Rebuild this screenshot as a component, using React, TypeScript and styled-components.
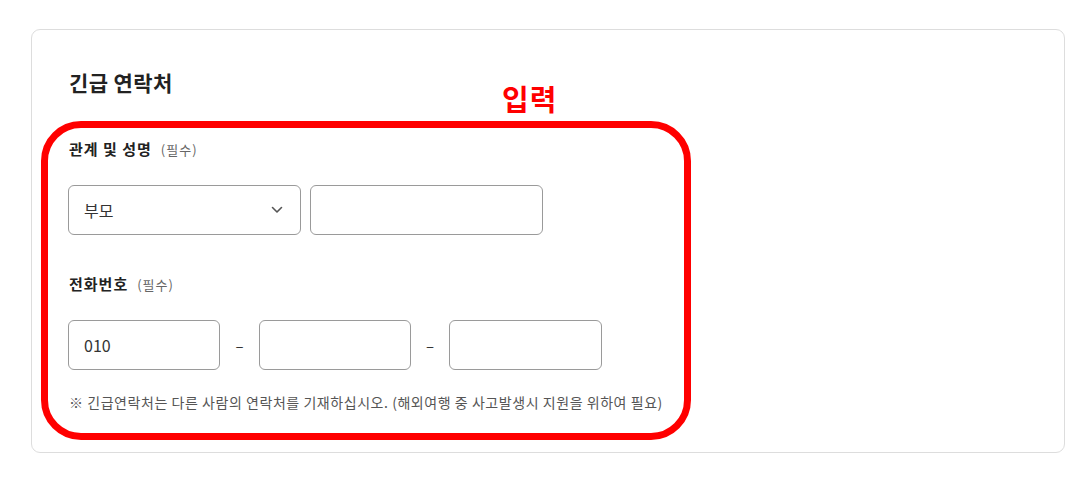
import React from 'react';
import styled, { createGlobalStyle } from 'styled-components';

const GlobalStyle = createGlobalStyle`
  body {
    margin: 0;
    background: #ffffff;
    font-family: "Noto Sans CJK KR", "Noto Sans", sans-serif;
    color: #222;
  }
`;

const Page = styled.div`
  padding: 29px 22px 30px 31px;
`;

const Card = styled.section`
  position: relative;
  box-sizing: border-box;
  width: 1034px;
  border: 1px solid #dddddd;
  border-radius: 9px;
  padding: 38px 36px 40px;
`;

const Title = styled.h2`
  margin: 0 0 0 1px;
  font-size: 21px;
  line-height: 28px;
  font-weight: 700;
  letter-spacing: 0.4px;
  color: #222;
`;

const Field = styled.div<{ $top: number }>`
  display: flex;
  flex-direction: column;
  gap: 25px;
  margin-top: ${(p) => p.$top}px;
`;

const Label = styled.div`
  display: flex;
  align-items: baseline;
  gap: 9px;
  margin-left: 1px;
  font-size: 15px;
  line-height: 20px;
  font-weight: 700;
  letter-spacing: 1px;
  color: #222;
`;

const Required = styled.span`
  font-size: 13px;
  font-weight: 400;
  letter-spacing: 1px;
  color: #666;
`;

const Row = styled.div`
  display: flex;
  align-items: center;
`;

const Box = styled.div<{ $width: number }>`
  box-sizing: border-box;
  display: flex;
  align-items: center;
  justify-content: space-between;
  width: ${(p) => p.$width}px;
  height: 50px;
  padding: 0 17px 0 15px;
  border: 1px solid #9a9a9a;
  border-radius: 6px;
  font-size: 16px;
  color: #333;
  background: #fff;
`;

const Gap = styled.div`
  width: 9px;
`;

const Dash = styled.span<{ $width: number }>`
  width: ${(p) => p.$width}px;
  text-align: center;
  font-size: 15px;
  color: #333;
`;

const Note = styled.p`
  margin: 22px 0 0 1px;
  font-size: 14px;
  line-height: 20px;
  letter-spacing: 0.55px;
  color: #555;
`;

const Highlight = styled.div`
  position: absolute;
  left: 9px;
  top: 91px;
  width: 650px;
  height: 319px;
  box-sizing: border-box;
  border: 7px solid #ff0000;
  border-radius: 40px;
  pointer-events: none;
`;

const Tag = styled.span`
  position: absolute;
  left: 470px;
  top: 47px;
  font-size: 29px;
  font-weight: 700;
  letter-spacing: 1px;
  color: #ff0000;
`;

const Chevron = () => (
  <svg width="12" height="8" viewBox="0 0 12 8" fill="none">
    <path d="M1.5 1.5L6 6L10.5 1.5" stroke="#555" strokeWidth="1.6" strokeLinecap="round" strokeLinejoin="round" />
  </svg>
);

export default function App() {
  return (
    <>
      <GlobalStyle />
      <Page>
        <Card>
          <Title>긴급 연락처</Title>
          <Field $top={43}>
            <Label>
              관계 및 성명 <Required>(필수)</Required>
            </Label>
            <Row>
              <Box $width={233}>
                부모
                <Chevron />
              </Box>
              <Gap />
              <Box $width={233} />
            </Row>
          </Field>
          <Field $top={39}>
            <Label>
              전화번호 <Required>(필수)</Required>
            </Label>
            <Row>
              <Box $width={152}>010</Box>
              <Dash $width={39}>–</Dash>
              <Box $width={152} />
              <Dash $width={38}>–</Dash>
              <Box $width={153} />
            </Row>
          </Field>
          <Note>※ 긴급연락처는 다른 사람의 연락처를 기재하십시오. (해외여행 중 사고발생시 지원을 위하여 필요)</Note>
          <Highlight />
          <Tag>입력</Tag>
        </Card>
      </Page>
    </>
  );
}
